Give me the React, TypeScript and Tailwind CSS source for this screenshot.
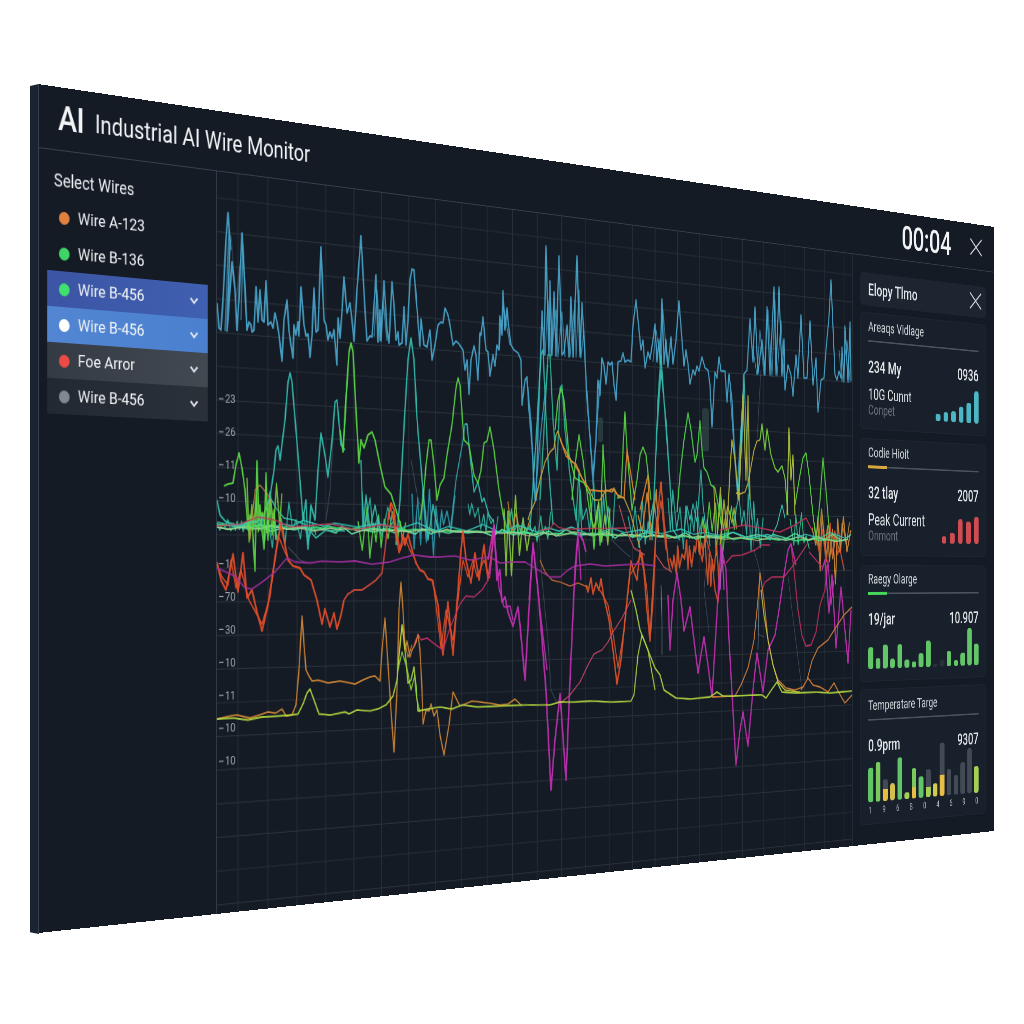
import React from 'react';

type Point = [number, number];

// The board is a flat 1600x849 panel seen from an angle. These describe that projection.
const SCALE_X = 0.83986;
const SLOPE = 0.12563;
const DEPTH = 0.00025352;
const SIDEBAR_W = 225;
const HEADER_H = 64;

// Traces are stored in projected coordinates, this brings them back to the flat chart.
const unproject = ([x, y]: Point): Point => {
  const d = x - 38;
  const u = d / (SCALE_X - DEPTH * d);
  const v = (y - 84) * (1 + DEPTH * u) - SLOPE * u;
  return [u - SIDEBAR_W, v - HEADER_H];
};

const toPath = (pts: Point[]) =>
  'M' + pts.map(unproject).map(([x, y]) => `${x.toFixed(1)} ${y.toFixed(1)}`).join('L');

// "x,y x,y | x,y x,y" where the bar lifts the pen
const parsePath = (s: string) =>
  s
    .split('|')
    .map((part) => toPath(part.trim().split(/\s+/).map((p) => p.split(',').map(Number) as Point)))
    .join('');

const rand = (n: number) => {
  const r = Math.sin(n * 127.1 + 11.7) * 43758.5453;
  return r - Math.floor(r);
};

// Zigzag between x0 and x1 around a line going from y0 to y1
const noise = (x0: number, x1: number, y0: number, y1: number, amp: number, step: number, seed: number): Point[] => {
  const pts: Point[] = [];
  let i = 0;
  for (let x = x0; x <= x1; x += step * (0.6 + 0.8 * rand(seed * 3 + i))) {
    const t = (x - x0) / (x1 - x0);
    const dir = i % 2 ? 1 : -1;
    const r = rand(seed + i);
    pts.push([x, y0 + (y1 - y0) * t + dir * amp * (0.1 + 0.9 * r ** 1.4)]);
    i++;
  }
  return pts;
};

const TRACES: { color: string; width?: number; opacity?: number; points: string }[] = [
  // faint ghosts
  {
    color: '#5d7080',
    width: 1.2,
    opacity: 0.55,
    points: `541,440 539,530 542,580 548,640 551,690 556,701 562,703 | 788,575 792,610 797,650 802,690 | 612,540 622,550 630,557
    | 708,545 704,590 709,632 | 761,370 757,440 | 750,490 754,550 761,575 | 758,634 764,637 | 411,460 418,500 423,510 | 334,425 330,490 326,520
    | 231,235 236,300 240,265 | 288,547 300,560 308,563`,
  },
  { color: '#7fa0b0', width: 1.4, opacity: 0.7, points: '661,585 662,620 662,655 | 760,572 759,600 758,650' },
  // blue, top
  {
    color: '#4aa9cf',
    width: 2.2,
    points: `217,303 219,328 221,330 223,300 226,240 228,213 230,240 227,331 232,262 235,290 237,330 239,298 242,233 245,290 247,330 249,322 251,325 252,332
    254,330 256,287 258,322 260,290 262,320 264,322 266,281 268,325 271,322 273,328 275,313 277,322 279,335 282,361 284,320 287,300 289,331 291,345 293,358
    294,325 296,335 298,322 299,336 301,287 304,325 306,336 308,334 310,357 312,335 314,288 316,332 318,330 321,247 324,320 326,325 328,340 330,332 332,338
    334,330 335,342 337,365 338,318 340,338 342,312 344,277 347,313 350,303 352,320 354,341 357,290 361,236 365,310 367,341 370,336 372,337 376,275 378,342
    380,310 381,341 384,281 387,330 389,343 392,282 394,305 396,340 398,332 399,345 402,343 404,307 406,345 408,320 410,280 412,269 414,270 417,310 420,346
    421,319 424,345 427,347 430,330 432,360 435,345 438,325 441,322 443,323 445,308 448,315 450,325 453,345 456,341 459,344 463,350 465,370 467,360
    469,394 471,360 474,346 476,355 478,380 480,333 481,335 483,317 486,350 488,352 490,376 493,355 495,366 497,345 499,350 500,316 502,335 503,291 505,330
    507,308 509,330 511,345 514,350 518,353 521,360 522,405 525,380 527,377 529,410 532,445 534,490 536,500 538,430 540,370 542,311 544,355 546,246 549,354
    550,281 552,355 554,292 556,356 559,256 562,355 564,352 567,325 569,357 571,297 573,357 577,256 580,357 582,303 585,358 587,400 591,450 593,475 596,440
    598,380 600,395 602,358 604,366 606,384 608,362 610,365 612,362 614,385 616,400 618,362 621,361 623,353 625,362 628,360 631,362 633,325 636,300 639,330
    641,350 643,340 645,368 648,352 650,359 653,340 655,324 657,362 659,340 660,364 662,299 664,364 666,340 668,367 671,337 673,364 676,340 679,301 682,340
    684,366 686,350 688,364 690,384 693,370 695,375 697,366 699,371 702,357 705,368 708,370 710,385 712,427 715,372 717,378 719,357 721,371 725,371 727,402
    729,374 732,400 734,440 738,500 742,440 744,374 747,370 750,319 753,362 755,307 758,374 762,340 765,375 767,307 770,375 774,287 776,375 779,287 782,376
    784,339 785,390 788,365 791,375 793,396 796,355 798,378 801,315 804,378 807,378 810,321 813,385 816,358 818,412 821,380 824,378 826,350 829,317 831,280
    835,375 837,380 839,371 841,378 842,347 844,382 845,326 848,382 850,322 851,381`,
  },
  {
    color: '#4aa9cf',
    width: 1.6,
    opacity: 0.7,
    points: `545,356 548,300 551,357 556,310 558,357 562,312 565,357 | 570,357 575,300 576,357 579,290 581,358 584,330 585,358
    | 753,350 757,375 760,330 764,375 768,310 772,376 775,300 777,376 781,320 784,377 | 839,350 842,382 847,340 850,382
    | 225,331 229,230 231,250 | 241,320 243,245 247,331 | 374,337 377,290 380,341 383,300 387,341 | 499,350 503,305 510,345 | 653,362 656,330 661,362 663,310 667,362`,
  },
  { color: '#3f9cc4', width: 1.8, points: '527,380 531,420 535,500 540,440 548,365 | 587,390 593,485 600,380 | 730,390 737,490 744,380' },
  // teal peaks
  {
    color: '#35c3b4',
    width: 2,
    points: `217,500 220,515 226,522 240,526 262,520 270,497 274,470 276,450 278,446 280,460 285,420 288,382 290,373 292,382 296,430 300,480 303,520 306,500
    308,549 311,505 315,520 318,470 321,433 325,455 328,477 332,440 335,402 337,400 341,445 345,450`,
  },
  { color: '#33c4a4', width: 1.7, points: '270,497 276,508 284,518 294,520 304,524 316,538 326,530 345,531' },
  { color: '#35c3b4', width: 1.8, points: '361,460 363,530 366,495 370,530 375,505 380,533' },
  { color: '#35c3b4', width: 2.1, points: '396,545 400,500 405,410 408,360 411,338 414,360 417,420 423,490 428,540 433,505 438,530' },
  { color: '#3aa6ad', width: 1.7, points: '451,525 456,480 463,440 465,424' },
  { color: '#35c3b4', width: 1.9, points: '465,424 467,424 470,455 474,492 478,482 482,502 484,498 489,515 494,522' },
  { color: '#35c3b4', width: 2, points: '530,530 536,440 541,355 543,350 548,460 553,525' },
  { color: '#2fbd9b', width: 2, points: '540,500 544,430 548,355 550,355 553,420 557,470 560,388 562,385 565,430 570,475 576,520 579,470 582,540' },
  { color: '#35c3b4', width: 2.1, points: '640,540 648,530 654,500 658,400 661,355 664,400 669,470 673,530 680,540 | 652,540 657,430 661,370 666,420 672,515' },
  { color: '#35c3b4', width: 1.8, points: '684,535 687,506 690,520 693,504 697,522 701,470 703,505 706,530 | 733,525 738,500 741,430 744,375 748,480 752,520' },
  { color: '#35c3b4', width: 1.9, points: '765,535 770,540 777,525 782,505 785,518' },
  // green peaks
  {
    color: '#5ddb45',
    width: 2,
    points: `224,486 228,484 233,483 236,465 239,453 242,468 245,490 248,530 250,515 252,520 255,571 257,461 259,520 260,505 262,530 264,549 266,473 268,540
    270,500 272,535 274,510 276,540`,
  },
  { color: '#5ddb45', width: 2.2, points: '343,452 346,400 349,352 351,343 353,352 356,410 359,463 361,440 364,448 368,435 372,432 375,440 380,465 385,487 391,494 396,510 402,530' },
  { color: '#4fd94b', width: 1.9, points: '340,430 343,452 347,380' },
  { color: '#5ddb45', width: 2, points: '420,520 423,500 426,465 429,440 431,440 434,465 437,500 440,485 444,478 447,455 452,425 456,388 458,378 460,385 464,440 469,445 474,475 478,483 481,470 484,443 487,441 490,427 494,450 499,490 504,520' },
  { color: '#5ddb45', width: 2, points: '555,430 558,400 561,388 564,400 569,455 575,478 584,483 590,495 594,549 597,510 600,545 603,445 606,500 610,535' },
  { color: '#5ddb45', width: 2, points: '572,500 575,465 579,435 583,460 588,500 591,520 | 617,498 621,497 623,450 625,412 627,450 632,510 637,480 640,455 643,447 646,455 651,500' },
  { color: '#4fd94b', width: 2.1, points: '677,512 680,475 684,440 688,413 691,430 695,462 697,455 700,421 702,450 704,468 707,472 711,485 715,488 719,510 722,530' },
  { color: '#7fd83f', width: 2.1, points: '760,440 762,424 765,450 767,429 771,455 775,468 778,472 782,466 785,478 788,515' },
  { color: '#c4b63d', width: 1.9, points: '736,493 740,494 745,492 748,483 754,450 757,441 760,440' },
  { color: '#b4cc3a', width: 2.1, points: '787,515 789,428 791,480 793,455 795,515' },
  { color: '#b9b83a', width: 2.1, points: '720,545 724,500 727,530 730,470 732,440 735,460 739,500 743,395 745,450 746,480 748,396 750,500' },
  { color: '#5ddb45', width: 2.1, points: '795,505 800,475 803,458 806,453 809,475 813,515 816,540 820,500 823,458 826,490 830,540' },
  // yellow / orange mid
  { color: '#c9a63d', width: 1.8, points: '528,520 530,513 535,502 540,480 545,462 550,452 554,448 556,435 558,431 561,442 566,452 572,462 576,464 582,478 588,487 594,500 600,500 606,490 612,492 614,488 618,496 624,498 630,512 640,548' },
  { color: '#e88d2d', width: 2, points: '560,438 566,456 574,463 583,480 590,490 600,491 608,491 612,489 618,495 624,498 627,450 631,475 635,500 | 640,510 648,475 650,540' },
  { color: '#c98e45', width: 1.2, points: '250,540 255,490 260,485 268,495 272,505' },
  // red
  {
    color: '#e84f2b',
    width: 2.4,
    points: `217,562 221,580 226,590 230,570 233,554 238,592 243,553 247,598 252,590 257,612 262,631 268,605 274,565 278,540 281,524 285,545 288,560 293,566
    300,568 304,575 311,580 317,600 322,624 325,609 330,627 334,613 337,629 341,615 344,600`,
  },
  { color: '#dc4a3a', width: 2, points: '344,600 348,594 354,590 362,590 368,586 376,580 382,573 385,550 388,520 391,503' },
  {
    color: '#e84f2b',
    width: 2.5,
    points: `388,520 391,503 394,510 396,530 400,550 403,535 405,545 408,534 412,550 416,563 420,570 424,572 428,579 432,580 438,605 443,655 448,602 453,655
    458,590 461,550 463,531 466,560 471,583 475,553 479,580 484,545 488,580 492,550 494,530`,
  },
  {
    color: '#e84f2b',
    width: 1.7,
    points: `217,565 222,577 228,585 231,560 236,588 241,570 249,600 262,624 270,597 278,535 284,550 290,563 | 388,515 391,508 399,553 405,538 412,555
    | 433,580 441,648 446,610 453,640 463,560 468,577 473,560 477,577 484,560 490,578`,
  },
  { color: '#e0552b', width: 2.5, points: '586,585 588,592 591,578 593,594 596,583 599,590 601,579 604,598 609,620 613,650 617,684 621,660 626,610 631,561 634,572 637,580 640,550 644,572 647,610 650,641 653,600 656,530 661,482 664,520 668,560 670,570' },
  { color: '#e0552b', width: 1.8, points: '600,590 608,605 614,640 618,668 624,630 630,575 636,565 642,553 647,590 650,635 655,545 661,500 666,550' },
  { color: '#c96a35', width: 1.7, points: '540,560 545,572 552,580 560,582 570,586 578,583 588,587' },
  { color: '#d84f2a', width: 2.4, points: '703,525 708,545 712,560 715,590 718,602 721,570 724,560' },
  // crimson
  { color: '#c33a56', width: 1.5, points: '217,526 240,524 258,517 275,520 290,527 330,524 355,530 380,525 400,527 | 540,530 550,529 554,523 558,527 565,529 630,528' },
  { color: '#c4326a', width: 1.7, points: '414,645 418,634 421,640 427,638 436,645 443,650 450,628 460,604 466,596 474,597 482,590 488,580 491,560' },
  { color: '#c4325e', width: 1.8, points: '720,530 730,528 745,525 765,529 780,532 795,525 806,518 812,530' },
  { color: '#b8305c', width: 2.2, points: '791,544 794,570 798,610 802,636 806,646 811,645 816,632 820,605 825,590 827,565' },
  { color: '#c4325e', width: 1.9, points: '726,563 732,556 742,555 755,550 762,545 770,545 | 761,592 765,582 772,577 784,577 792,567 800,555 808,543 | 809,552 816,560 822,567' },
  { color: '#d0486a', width: 1.6, points: '562,702 570,695 580,682 588,665 594,654 602,650 608,642 613,632 622,618 631,600' },
  { color: '#c4525e', width: 1.7, points: '619,505 626,530 634,548 645,555 | 656,555 664,567 672,572' },
  // magenta
  {
    color: '#a32f9e',
    width: 1.8,
    points: `217,568 235,576 245,588 252,589 262,582 275,572 287,558 295,562 310,563 322,561 340,562 355,561 372,564 390,562 402,558 414,555 430,557 440,557
    455,556 470,560 490,557 500,563 510,562 525,562 540,571 550,577 560,577 568,570 575,566 590,564 605,566 640,564 656,566`,
  },
  {
    color: '#c531b5',
    width: 2.6,
    points: `488,560 494,525 497,580 500,570 502,602 505,597 508,612 513,626 518,607 520,625 525,680 529,610 533,543 538,590 542,640 546,690 551,790 555,740
    560,694 566,780 570,680 575,570 578,533 583,540 586,552`,
  },
  { color: '#c531b5', width: 2, points: '490,575 494,530 499,588 504,607 510,606 513,620 | 529,600 533,545 540,610 547,670 | 575,580 578,534 581,580' },
  {
    color: '#c531b5',
    width: 2.5,
    points: `668,595 670,650 673,600 677,573 681,600 684,631 690,607 694,640 698,673 701,655 704,637 708,665 712,697 716,630 719,580 721,545
    726,570 729,640 733,710 736,765 740,730 743,712 748,746 753,690 757,653 763,692 768,650 775,635 779,610 784,575 788,550 791,544 796,565`,
  },
  { color: '#b04fc0', width: 2.2, points: '720,590 722,548 724,590' },
  { color: '#c531b5', width: 2.5, points: '822,570 825,560 829,613 832,575 836,648 841,587 845,630 848,663 851,610' },
  { color: '#c531b5', width: 1.9, points: '826,585 828,560 831,605 834,580' },
  // orange, bottom
  {
    color: '#d98c35',
    width: 1.8,
    points: `217,719 230,716 237,715 250,718 260,715 268,712 276,713 282,709 286,716 292,715 296,705 299,670 302,616 304,645 306,670 309,676 312,681 318,680
    328,683 340,681 355,684 363,680 370,677 375,676 380,681 382,650 385,618 388,665 391,710 394,752 397,690 399,610 401,582 403,610 405,650 407,641 410,657
    412,650 415,645 418,635 420,650 422,690 423,724 426,710 429,711 431,704 434,716 437,710 440,735 444,755 449,725 453,692 457,700 460,706 472,701 488,703
    500,705 508,704 515,699 522,706`,
  },
  { color: '#d98c35', width: 1.5, points: '398,665 402,625 405,643 408,657 412,645' },
  {
    color: '#d9823a',
    width: 1.9,
    points: `712,697 735,696 741,685 748,668 754,640 758,600 760,573 764,600 768,640 773,665 778,680 786,688 795,690 803,687 808,678 813,685 820,687 828,692
    834,683 839,693 845,703 852,695 | 801,690 807,680 812,661 818,648 828,640 836,627 844,615 852,607`,
  },
  // lime, bottom
  {
    color: '#b4d93f',
    width: 1.9,
    points: `217,719 232,718 248,720 262,717 278,716 290,715 298,714 303,704 307,693 310,689 314,700 319,714 330,715 345,712 349,714 357,710 370,711 378,709
    386,705 393,696 397,680 400,645 402,625 405,650 408,683 411,680 414,667 416,690 418,711 428,709 440,707 452,709 462,705 478,707 500,706 520,705 550,705
    560,702 575,702 590,701 612,702 631,701 634,695 638,655 642,635 648,650 655,690`,
  },
  { color: '#8fd33f', width: 1.6, points: '398,670 402,652 407,668 411,690 415,675 417,700 420,712' },
  {
    color: '#b4d93f',
    width: 2.1,
    points: `631,590 636,610 640,630 648,650 655,668 660,675 664,690 670,694 676,698 690,699 710,697 717,692 723,696 735,696 752,695 762,695 766,698 772,689
    777,682 782,692 795,693 815,692 830,693 852,691`,
  },
  { color: '#c4cf3f', width: 1.9, points: '761,590 764,615 768,640 773,665 778,682 785,690 800,692' },
];

const NOISES: { color: string; width?: number; points: Point[] }[] = [
  { color: '#31c98f', points: noise(217, 262, 524, 527, 6, 2.2, 3) },
  { color: '#31b9a5', points: noise(262, 318, 524, 528, 24, 4, 21) },
  { color: '#7fcf3b', width: 1.8, points: noise(247, 282, 515, 520, 38, 3, 14) },
  { color: '#5ddb45', width: 1.8, points: noise(358, 408, 532, 527, 38, 3.4, 31) },
  { color: '#31b9a5', points: noise(362, 400, 522, 520, 32, 4.2, 57) },
  { color: '#2c9eb0', width: 1.9, points: noise(412, 456, 520, 516, 38, 3.2, 88) },
  { color: '#31b9a5', points: noise(468, 500, 510, 526, 16, 2.6, 72) },
  { color: '#8fd33f', width: 2.1, points: noise(504, 532, 540, 542, 46, 3.2, 91) },
  { color: '#d98c35', width: 1.8, points: noise(508, 532, 525, 528, 24, 3.8, 95) },
  { color: '#31c98f', width: 1.8, points: noise(504, 552, 526, 530, 20, 2.9, 131) },
  { color: '#31b9a5', width: 1.9, points: noise(576, 616, 512, 518, 36, 3, 141) },
  { color: '#8fd33f', width: 1.9, points: noise(590, 612, 520, 520, 32, 3.6, 152) },
  { color: '#31b9a5', width: 1.9, points: noise(628, 658, 525, 530, 30, 3, 163) },
  { color: '#e88d2d', width: 2.1, points: noise(638, 662, 525, 530, 44, 3.8, 169) },
  { color: '#31b9a5', width: 1.9, points: noise(668, 712, 518, 524, 30, 3.2, 175) },
  { color: '#5ddb45', width: 1.9, points: noise(697, 738, 530, 524, 32, 2.9, 184) },
  { color: '#b9b83a', width: 2, points: noise(714, 740, 525, 510, 42, 3.3, 199) },
  { color: '#e0552b', width: 2.6, points: noise(670, 704, 564, 545, 19, 1.9, 211) },
  { color: '#e0552b', width: 2.4, points: noise(700, 722, 555, 575, 28, 2.3, 217) },
  { color: '#31b9a5', width: 1.9, points: noise(738, 766, 512, 530, 32, 2.6, 225) },
  { color: '#31c98f', width: 1.9, points: noise(790, 812, 536, 540, 26, 3, 234) },
  { color: '#d98c35', width: 2.3, points: noise(812, 852, 540, 548, 40, 2.9, 244) },
  { color: '#b98f3f', width: 1.9, points: noise(814, 852, 535, 542, 28, 3.6, 251) },
  { color: '#e0552b', width: 2.2, points: noise(816, 846, 548, 552, 32, 3.4, 267) },
];

// The dense flat band that crosses the whole chart
const BAND: { color: string; width: number; points: Point[] }[] = [
  { color: '#3ddc7a', width: 2.2, points: noise(217, 852, 525, 541, 1.4, 7, 301) },
  { color: '#5fe0a0', width: 1.8, points: noise(217, 852, 528, 538, 4, 10, 333) },
  { color: '#35c3b4', width: 1.6, points: noise(217, 852, 523, 537, 5, 16, 377) },
  { color: '#b9c98a', width: 1.3, points: noise(217, 852, 527, 540, 2.5, 13, 411) },
];

const AXIS = ['23', '26', '11', '10', null, '1', '70', '30', '10', '11', '10', '10'];

const WIRES = [
  { label: 'Wire A-123', dot: 'bg-[#e0813f]', row: '' },
  { label: 'Wire B-136', dot: 'bg-[#3fd466]', row: '' },
  { label: 'Wire B-456', dot: 'bg-[#3fe06c]', row: 'bg-linear-to-r from-[#3c55a4] to-[#3f5fb0]', open: true },
  { label: 'Wire B-456', dot: 'bg-white', row: 'bg-linear-to-r from-[#5286d3] to-[#4a80cf]', open: true },
  { label: 'Foe Arror', dot: 'bg-[#ec4a45]', row: 'bg-linear-to-r from-[#353b44] to-[#434951]', open: true },
  { label: 'Wire B-456', dot: 'bg-[#818891]', row: 'bg-linear-to-r from-[#222932] to-[#2b3139]', open: true },
];

const CloseIcon = () => (
  <svg className="h-6 w-7" viewBox="0 0 28 24" fill="none" stroke="#d6dade" strokeWidth="2">
    <path d="M1 1L27 23M27 1L1 23" />
  </svg>
);

const ChevronIcon = () => (
  <svg className="h-2 w-3" viewBox="0 0 12 8" fill="none" stroke="#dfe5ee" strokeWidth="2.2">
    <path d="M1.5 1.5L6 6.2L10.5 1.5" />
  </svg>
);

const Sidebar = () => (
  <aside className="w-[225px] shrink-0 border-r border-[#363e49]">
    <h2 className="h-[49px] pt-[17px] pl-[19px] text-[18px] leading-[26px]">Select Wires</h2>
    <ul className="ml-[11px] w-[202px]">
      {WIRES.map((w, i) => (
        <li key={i} className={`flex h-9 items-center pr-3 pl-[14px] ${w.row}`}>
          <span className={`mr-[10px] h-[13px] w-[13px] rounded-full ${w.dot}`} />
          <span className="flex-1 text-[17.2px] whitespace-nowrap">{w.label}</span>
          {w.open && <ChevronIcon />}
        </li>
      ))}
    </ul>
  </aside>
);

const Chart = () => (
  <svg className="h-[785px] w-[1060px] shrink-0" viewBox="0 0 1060 785" fill="none" strokeLinejoin="round">
    <g stroke="#28303a" strokeWidth="1.2">
      {Array.from({ length: 26 }, (_, i) => (
        <path key={i} d={`M${28.4 + i * 40.6} 0V785`} />
      ))}
      {Array.from({ length: 22 }, (_, i) => (
        <path key={i} d={`M0 ${28 + i * 35.6}H1060`} />
      ))}
    </g>
    <g fill="#3d5a54" opacity="0.5">
      <rect x="578" y="236" width="8" height="30" rx="3" />
      <rect x="764" y="217" width="13" height="54" rx="4" />
    </g>
    <g fill="#9aa2ab" fontSize="12.5">
      {AXIS.map(
        (t, i) =>
          t && (
            <g key={i}>
              <rect x="3" y={239.5 + i * 34.9} width="6" height="1.2" />
              <text x="11" y={244.5 + i * 34.9}>
                {t}
              </text>
            </g>
          ),
      )}
    </g>
    {NOISES.map((n, i) => (
      <path key={i} d={toPath(n.points)} stroke={n.color} strokeWidth={n.width ?? 1.6} opacity={0.88} />
    ))}
    {BAND.map((n, i) => (
      <path key={i} d={toPath(n.points)} stroke={n.color} strokeWidth={n.width} opacity={0.9} />
    ))}
    {TRACES.map((t, i) => (
      <path key={i} d={parsePath(t.points)} stroke={t.color} strokeWidth={t.width ?? 1.6} opacity={t.opacity ?? 0.9} />
    ))}
  </svg>
);

type Seg = [number, string];

const Bars = ({ bars, className }: { bars: Seg[][]; className: string }) => (
  <div className={`flex items-end ${className}`}>
    {bars.map((segs, i) => (
      <div key={i} className="flex w-[10.5px] flex-col overflow-hidden rounded-[4px]">
        {segs.map(([h, color], j) => (
          <span key={j} className={color} style={{ height: h }} />
        ))}
      </div>
    ))}
  </div>
);

const GREEN = 'bg-[#62c568]';
const LIME = 'bg-[#a6cf55]';
const YELLOW = 'bg-[#e8bd46]';
const GRAY = 'bg-[#434955]';
const DIM = 'bg-[#2a313c]';

const TEAL_BARS: Seg[][] = [10, 13.5, 15, 22, 28, 45].map((h) => [[h, 'bg-[#4cb6c4]']]);
const RED_BARS: Seg[][] = [10, 15, 34, 31, 38].map((h) => [[h, 'bg-[#d24b50]']]);
const GREEN_BARS: Seg[][] = [29, 14, 32, 13.5, 32, 11, 8, 19, 36, 4, 9, 21, 8, 18, 52, 30].map((h, i) => [
  [h, i === 9 || i === 10 ? DIM : GREEN],
]);
const TEMP_BARS: Seg[][] = [
  [[46, GREEN]],
  [[53, 'bg-[#7cc95f]']],
  [[13, GRAY], [16, YELLOW]],
  [[23, 'bg-[#d3c04c]']],
  [[57, GREEN]],
  [[9, LIME]],
  [[26, 'bg-[#7cc95f]'], [15, YELLOW]],
  [[29, GREEN]],
  [[24, GRAY], [14, LIME]],
  [[18, 'bg-[#cfcb50]']],
  [[44, GRAY], [29, YELLOW]],
  [[36, GRAY]],
  [[27, GRAY]],
  [[44, GRAY]],
  [[63, GRAY]],
  [[37, LIME]],
];

type CardProps = {
  title: string;
  left: string;
  right: string;
  accent?: string;
  className: string;
  children: React.ReactNode;
};

const Card = ({ title, left, right, accent, className, children }: CardProps) => (
  <section className={`rounded-md border border-[#1e2732] bg-[#18202b] px-4 ${className}`}>
    <h3 className="mt-[7px] h-[22px] text-[18px] leading-[22px] whitespace-nowrap text-[#d3d7dc]">{title}</h3>
    <div className="mt-[6px] flex h-[4px] items-center bg-[linear-gradient(#4b535e,#4b535e)] bg-[length:100%_2px] bg-center bg-no-repeat">
      {accent && <span className={`h-[4px] ${accent}`} />}
    </div>
    <div className="mt-[21px] flex h-6 items-center justify-between text-[21.5px] font-medium whitespace-nowrap text-[#e6e9ec]">
      <span>{left}</span>
      <span>{right}</span>
    </div>
    {children}
  </section>
);

const Stats = () => (
  <aside className="flex w-[315px] shrink-0 flex-col border-l border-[#303843] pt-[22px] pr-[19px] pl-4 text-[#e4e7ea]">
    <div className="flex h-[44px] items-center justify-between rounded-md bg-[#1c2530] pr-[10px] pb-0.5 pl-[17px]">
      <span className="pt-1 text-[21.5px] font-medium">Elopy Tlmo</span>
      <CloseIcon />
    </div>
    <Card title="Areaqs Vidlage" left="234 My" right="0936" className="mt-[9px] h-[156px]">
      <div className="flex h-[54px] items-end justify-between">
        <div className="whitespace-nowrap">
          <p className="text-[20px] leading-6">10G Cunnt</p>
          <p className="text-[18px] leading-[18px] text-[#6b737d]">Conpet</p>
        </div>
        <Bars bars={TEAL_BARS} className="gap-[7px]" />
      </div>
    </Card>
    <Card title="Codie Hioit" left="32 tlay" right="2007" accent="w-[40px] bg-[#d8a83c]" className="mt-3 h-[157px]">
      <div className="flex h-[54px] items-end justify-between">
        <div className="whitespace-nowrap">
          <p className="text-[21.5px] leading-6">Peak Current</p>
          <p className="text-[18px] leading-[18px] text-[#6b737d]">Onmont</p>
        </div>
        <Bars bars={RED_BARS} className="gap-[8px]" />
      </div>
    </Card>
    <Card title="Raegy Olarge" left="19/jar" right="10.907" accent="w-[40px] bg-[#46d65a]" className="mt-3 h-[156px]">
      <Bars bars={GREEN_BARS} className="h-[54px] justify-between" />
    </Card>
    <Card title="Temperatare Targe" left="0.9prm" right="9307" className="mt-[10px] h-[181px] pt-[3px]">
      <Bars bars={TEMP_BARS} className="h-[63px] justify-between" />
      <div className="mt-[3px] flex justify-between px-px text-[12px] leading-4 text-[#aeb4bb]">
        {['1', '9', '6', '8', '0', '4', '6', '9', '0'].map((n, i) => (
          <span key={i}>{n}</span>
        ))}
      </div>
    </Card>
  </aside>
);

export default function App() {
  return (
    <main className="relative h-[1024px] w-[1024px] overflow-hidden bg-white font-['Roboto',sans-serif] text-[#f1f3f5]">
      {/* side face of the board */}
      <div className="absolute top-[84px] left-[30px] h-[850px] w-[9px] bg-[#1a2331] [clip-path:polygon(0_2px,100%_0,100%_100%,0_99.8%)]" />
      <div className="flex h-[849px] w-[1600px] origin-top-left flex-col bg-[#141b25] shadow-[inset_1px_0_#39424f] [transform:matrix3d(0.84949,0.14693,0,0.00025352,0,1,0,0,0,0,1,0,38,84,0,1)]">
        <header className="flex h-16 shrink-0 items-center border-b border-[#39414c] pl-[24px]">
          <span className="w-[45px] pt-0.5 text-[35px] font-medium tracking-[-1px]">AI</span>
          <h1 className="flex-1 pt-0.5 text-[25.2px] whitespace-nowrap">Industrial AI Wire Monitor</h1>
          <time className="mr-[43px] pt-0.5 text-[44px] leading-none font-medium tracking-[-0.3px]">00:04</time>
          <div className="mr-[28px]">
            <CloseIcon />
          </div>
        </header>
        <div className="flex min-h-0 flex-1">
          <Sidebar />
          <Chart />
          <Stats />
        </div>
      </div>
    </main>
  );
}
